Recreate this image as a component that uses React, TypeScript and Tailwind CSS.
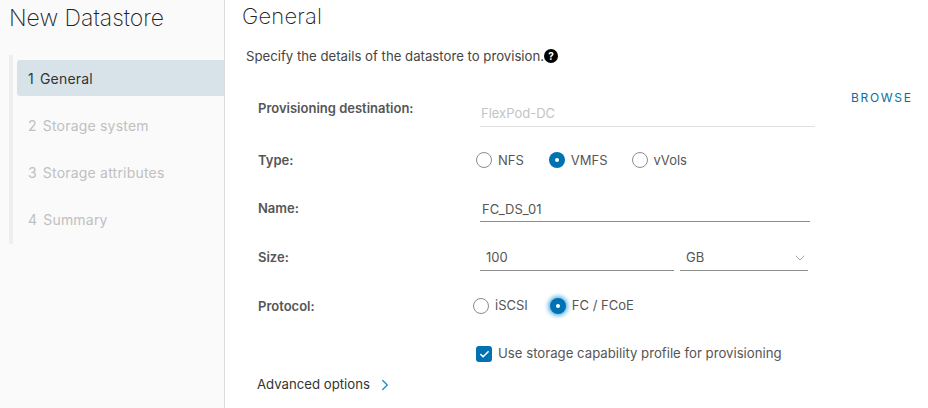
import { ChevronDown, ChevronRight, Check } from "lucide-react";

const steps = [
  { n: 1, label: "General", active: true },
  { n: 2, label: "Storage system", active: false },
  { n: 3, label: "Storage attributes", active: false },
  { n: 4, label: "Summary", active: false },
];

function Radio({
  label,
  checked,
  focused,
}: {
  label: string;
  checked?: boolean;
  focused?: boolean;
}) {
  return (
    <div className="flex items-center gap-[6px]">
      {checked ? (
        <span
          className={
            "flex h-4 w-4 items-center justify-center rounded-full bg-[#0072b3] " +
            (focused ? "shadow-[0_0_4px_2px_#5bb4e5]" : "")
          }
        >
          <span className="h-1 w-1 rounded-full bg-white" />
        </span>
      ) : (
        <span className="h-4 w-4 rounded-full border border-[#8c8c8c] bg-white" />
      )}
      <span className="pt-px">{label}</span>
    </div>
  );
}

function Row({
  label,
  height,
  children,
}: {
  label: string;
  height: string;
  children: React.ReactNode;
}) {
  return (
    <div className={"flex items-center pl-[33px] " + height}>
      <div className="w-[222px] shrink-0 pt-[2px] font-semibold text-[#565656]">{label}</div>
      {children}
    </div>
  );
}

export default function App() {
  return (
    <div className="flex h-[408px] w-[928px] overflow-hidden bg-white font-['Inter','Noto_Sans',sans-serif] text-[13px] text-[#565656]">
      <aside className="w-[225px] shrink-0 border-r border-[#dcdcdc] bg-[#fafafa]">
        <h1 className="pl-[9px] pt-[4px] text-[23px] leading-[28px] font-extralight text-[#222]">New Datastore</h1>
        <div className="mt-[23px] ml-[9px] flex h-[189px] border-l-4 border-[#eeeeee] pl-1 pt-[5px]">
          <ol className="w-full text-[14px] tracking-[0.2px]">
            {steps.map((s) => (
              <li
                key={s.n}
                className={
                  "mb-[11px] flex h-9 items-center gap-[6px] rounded-l-[3px] pl-[11px] pt-px " +
                  (s.active ? "bg-[#d8e3e9] text-[#333]" : "text-[#c0c0c0]")
                }
              >
                <span>{s.n}</span>
                <span>{s.label}</span>
              </li>
            ))}
          </ol>
        </div>
      </aside>
      <main className="min-w-0 flex-1">
        <h2 className="pl-[17px] pt-[2px] text-[22px] leading-[28px] font-extralight tracking-[0.2px] text-[#222]">General</h2>
        <div className="mt-[16px] flex items-center pl-[21px] text-[13.2px] leading-5 text-[#454545]">
          Specify the details of the datastore to provision.
          <span className="flex h-[14px] w-[14px] items-center justify-center rounded-full bg-black text-[10px] leading-none font-bold text-white">
            ?
          </span>
        </div>
        <div className="relative mt-[22px]">
          <div className="flex h-[48px] items-center pl-[33px]">
            <div className="mb-[6px] w-[222px] shrink-0 font-semibold text-[#565656]">Provisioning destination:</div>
            <div className="flex h-[30px] w-[335px] items-center border-b border-[#e0e0e0] pl-px pt-[4px] text-[#c4c4c4]">
              FlexPod-DC
            </div>
          </div>
          <span className="absolute left-[626px] top-[1px] text-[12px] font-normal tracking-[1.7px] text-[#0072a3]">
            BROWSE
          </span>
          <Row label="Type:" height="h-[48px]">
            <div className="ml-[-4px] flex gap-[25px]">
              <Radio label="NFS" />
              <Radio label="VMFS" checked />
              <div className="ml-[-1px]">
                <Radio label="vVols" />
              </div>
            </div>
          </Row>
          <Row label="Name:" height="h-[48px]">
            <div className="flex h-[28px] w-[330px] items-center border-b border-[#8c8c8c] pl-[2px] pt-[4px]">
              FC_DS_01
            </div>
          </Row>
          <Row label="Size:" height="h-[49px]">
            <div className="flex gap-[6px]">
              <div className="flex h-[28px] w-[194px] items-center border-b border-[#8c8c8c] pl-[6px] pt-[4px]">100</div>
              <div className="flex h-[28px] w-[128px] items-center justify-between border-b border-[#8c8c8c] pl-[6px] pt-[4px]">
                GB
                <ChevronDown size={16} strokeWidth={1} className="text-[#777]" />
              </div>
            </div>
          </Row>
          <Row label="Protocol:" height="h-[49px]">
            <div className="ml-[-7px] flex gap-[22px]">
              <Radio label="iSCSI" />
              <Radio label="FC / FCoE" checked focused />
            </div>
          </Row>
          <div className="flex h-[48px] items-center gap-[6px] pl-[251px] text-[13.2px]">
            <span className="flex h-4 w-4 items-center justify-center rounded-[3px] bg-[#0072b3]">
              <Check size={11} strokeWidth={3.5} className="text-white" />
            </span>
            Use storage capability profile for provisioning
          </div>
          <div className="flex h-[14px] items-center gap-[6px] pl-[32px] text-[13.2px] text-[#333]">
            Advanced options
            <ChevronRight size={18} strokeWidth={1.8} className="text-[#1a8fc9]" />
          </div>
        </div>
      </main>
    </div>
  );
}
